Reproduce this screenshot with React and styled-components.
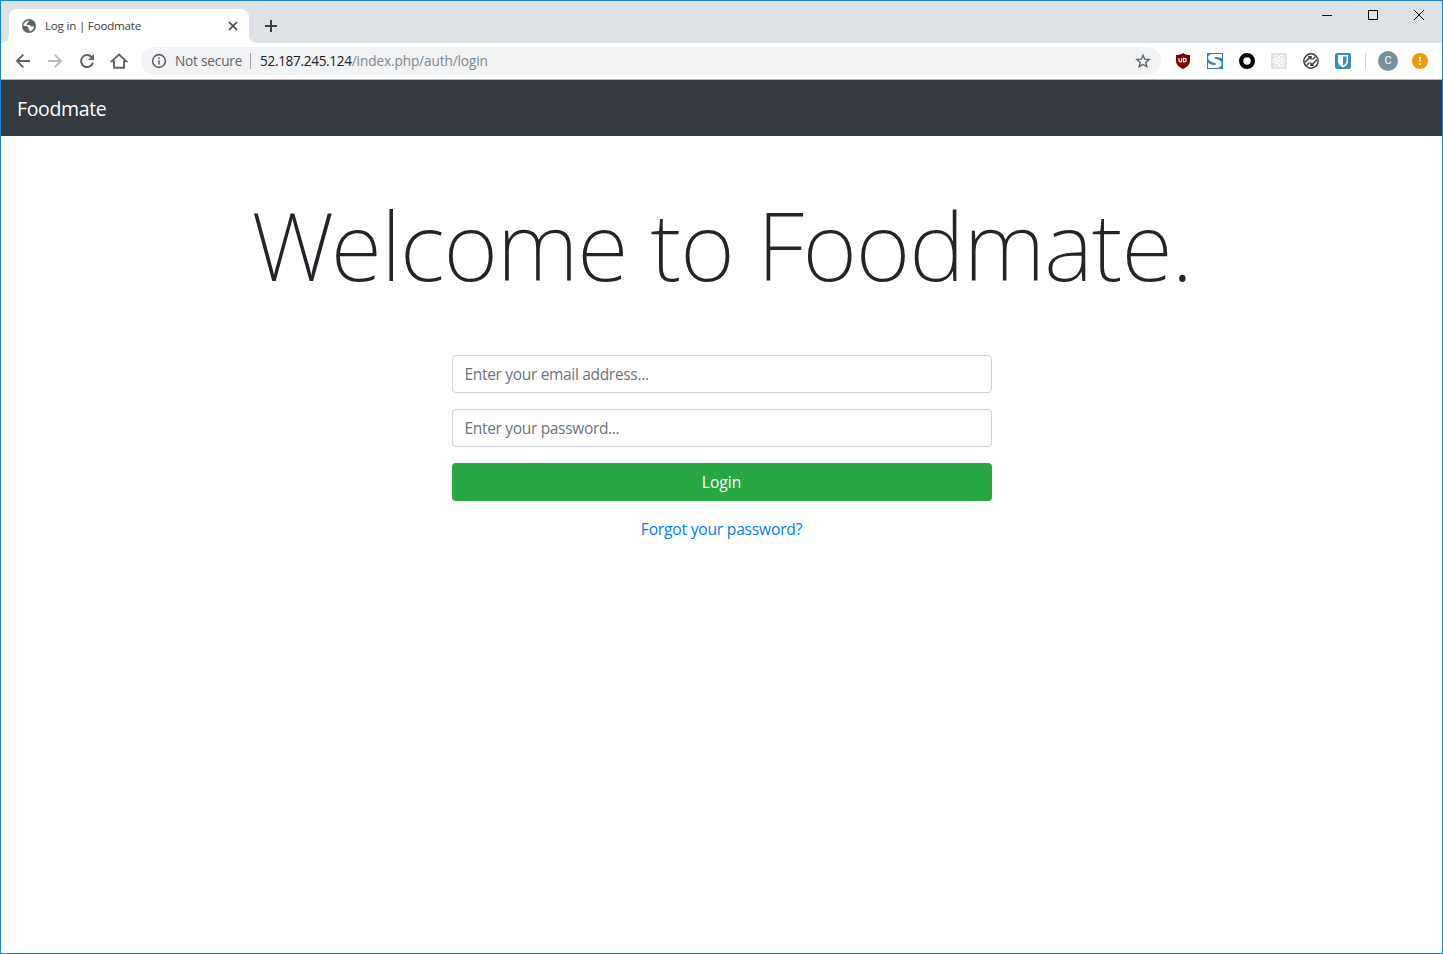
import React from "react";
import styled, { createGlobalStyle } from "styled-components";

const GlobalStyle = createGlobalStyle`
  *, *::before, *::after { box-sizing: border-box; }
  html, body { margin: 0; padding: 0; background: #fff; }
  body { font-family: "Segoe UI", "Open Sans", "Noto Sans", sans-serif; overflow: hidden; }
  svg { display: block; flex: none; }
`;

const Window = styled.div`
  width: 1443px;
  height: 954px;
  display: flex;
  flex-direction: column;
  border: 1px solid #1883d7;
  background: #fff;
`;

const TabStrip = styled.div`
  flex: none;
  height: 42px;
  display: flex;
  align-items: flex-end;
  background: #dee1e6;
`;

const TabCurve = styled.div`
  width: 8px;
  height: 8px;
  background: radial-gradient(circle at ${(p) => (p.$side === "left" ? "0 0" : "100% 0")}, #dee1e6 7.5px, #fff 8.5px);
`;

const Tab = styled.div`
  width: 240px;
  height: 34px;
  display: flex;
  align-items: center;
  padding: 0 9px 0 13px;
  border-radius: 8px 8px 0 0;
  background: #fff;
`;

const TabTitle = styled.span`
  flex: 1;
  margin-left: 9px;
  font-size: 11.6px;
  line-height: 16px;
  letter-spacing: -0.21px;
  white-space: nowrap;
  color: #3c4043;
`;

const IconButton = styled.button`
  flex: none;
  width: ${(p) => p.$width || 32}px;
  height: ${(p) => p.$height || 32}px;
  display: flex;
  align-items: center;
  justify-content: center;
  padding: 0;
  border: 0;
  background: none;
  color: ${(p) => p.$color || "#5f6368"};
`;

const WindowControls = styled.div`
  display: flex;
  align-self: flex-start;
  margin-left: auto;
`;

const Toolbar = styled.div`
  flex: none;
  height: 37px;
  display: flex;
  align-items: center;
  padding: 0 6px;
  border-bottom: 1px solid #b0b2b5;
  background: #fff;
`;

const AddressBar = styled.div`
  flex: none;
  width: 1020px;
  height: 28px;
  display: flex;
  align-items: center;
  margin: 0 6px;
  padding: 0 10px;
  border-radius: 14px;
  background: #f1f3f4;
  font-size: 13.6px;
  line-height: 20px;
  white-space: nowrap;
`;

const SecurityLabel = styled.span`
  margin-left: 8px;
  width: 67px;
  letter-spacing: -0.18px;
  color: #5f6368;
`;

const AddressDivider = styled.span`
  width: 1px;
  height: 16px;
  margin: 0 9px 0 8px;
  background: #9aa0a6;
`;

const Host = styled.span`
  letter-spacing: -0.32px;
  color: #202124;
`;

const UrlPath = styled.span`
  flex: 1;
  letter-spacing: -0.1px;
  color: #80868b;
`;

const ToolbarDivider = styled.span`
  width: 1px;
  height: 16px;
  margin: 0 6px;
  background: #c8cacd;
`;

const Avatar = styled.span`
  width: 20px;
  height: 20px;
  display: flex;
  align-items: center;
  justify-content: center;
  border-radius: 50%;
  background: #78909c;
  font: 11px/20px Roboto, sans-serif;
  color: #fff;
`;

const Navbar = styled.nav`
  flex: none;
  height: 56px;
  display: flex;
  align-items: center;
  padding: 2px 16px 0;
  background: #343a40;
`;

const Brand = styled.a`
  font-size: 19.5px;
  line-height: 30px;
  letter-spacing: -0.35px;
  color: #fff;
`;

const Page = styled.main`
  display: flex;
  flex-direction: column;
  align-items: center;
`;

const Heading = styled.h1`
  margin: 51px 0 52px;
  font-family: "Noto Sans", "Open Sans", sans-serif;
  font-size: 94px;
  font-weight: 240;
  line-height: 116px;
  letter-spacing: -1.2px;
  white-space: nowrap;
  color: #212529;
`;

const LoginForm = styled.form`
  width: 540px;
  display: flex;
  flex-direction: column;
  gap: 16px;
`;

const Field = styled.input`
  width: 100%;
  height: 38px;
  padding: 6px 12px;
  border: 1px solid #ced4da;
  border-radius: 4px;
  outline: 0;
  font-family: inherit;
  font-size: 15.5px;
  letter-spacing: -0.32px;
  &::placeholder { color: #6c757d; opacity: 1; }
`;

const SubmitButton = styled.button`
  height: 38px;
  padding: 0;
  border: 0;
  border-radius: 4px;
  background: #28a745;
  font-family: inherit;
  font-size: 15.6px;
  line-height: 24px;
  letter-spacing: 0;
  color: #fff;
`;

const ForgotLink = styled.a`
  align-self: center;
  font-size: 15.6px;
  line-height: 24px;
  letter-spacing: -0.2px;
  color: #007bff;
`;

const Globe = () => (
  <svg width="14" height="14" viewBox="0 0 14 14">
    <circle cx="7" cy="7" r="7" fill="#5f6368" />
    <path d="M8 1.5c-.9.5-2 .8-2 1.8 0 .9-.9 1-1.3 1.6-.3.6.2 1.2 1.1 1.2h1.6c.9 0 .9 1.3 1.8 1.4.8.1 1.7-.3 2.9-.3-.2 2.8-2.200 4.800-4.600 5.200v-1.500c-.1-.9-1.200-.8-1.300-1.700 0-.9.3-1.400-.4-1.800-1.100-.5-2.600-.5-4.200-.5C1.500 3.900 4.200 1.300 8 1.500z" fill="#fff" />
  </svg>
);

const Cross = () => (
  <svg width="10" height="10" viewBox="0 0 10 10" stroke="currentColor" strokeWidth="1.7">
    <path d="M1 1l8 8M9 1l-8 8" />
  </svg>
);

const Plus = () => (
  <svg width="12" height="12" viewBox="0 0 12 12" stroke="currentColor" strokeWidth="2">
    <path d="M6 0v12M0 6h12" />
  </svg>
);

const Arrow = ({ forward }) => (
  <svg width="16" height="16" viewBox="0 0 16 16" fill="none" stroke="currentColor" strokeWidth="1.9">
    <path d={forward ? "M1 8h13M7.700 1.600L14 8l-6.300 6.400" : "M15 8H2M8.300 1.600L2 8l6.300 6.400"} />
  </svg>
);

const Reload = () => (
  <svg width="16" height="16" viewBox="0 0 16 16" fill="none" stroke="currentColor" strokeWidth="2">
    <path d="M13.900 9.500A6 6 0 1 1 12.500 4" />
    <path d="M15 1v6H9z" fill="currentColor" stroke="none" />
  </svg>
);

const Home = () => (
  <svg width="18" height="16" viewBox="0 0 18 16" fill="none" stroke="currentColor" strokeWidth="1.9">
    <path d="M1.500 8.400H4v6.300h10V8.400h2.500L9 1.500z" />
  </svg>
);

const Info = () => (
  <svg width="16" height="16" viewBox="0 0 16 16" fill="none" stroke="#5f6368" strokeWidth="1.600">
    <circle cx="8" cy="8" r="6.400" />
    <path d="M8 7.200v4.300M8 4.500v1.600" />
  </svg>
);

const Star = () => (
  <svg width="16" height="16" viewBox="0 0 16 16" fill="none" stroke="#5f6368" strokeWidth="1.400">
    <path d="M8 2.200l1.700 4 4.400.4-3.300 2.900 1 4.200L8 11.500l-3.800 2.200 1-4.200-3.300-2.900 4.400-.4z" />
  </svg>
);

const AdShield = () => (
  <svg width="16" height="16" viewBox="0 0 16 16">
    <path d="M8 0c2 1.400 4 2 7 2v5.500c0 4-2.500 6.300-7 8.500-4.500-2.200-7-4.500-7-8.500V2c3 0 5-.6 7-2z" fill="#800000" />
    <path d="M4 5.200v2.300a1.400 1.400 0 0 0 2.800 0V5.200M8.500 5.300v3.500h1a1.750 1.750 0 0 0 0-3.500z" fill="none" stroke="#fff" strokeWidth="1.200" />
  </svg>
);

const SBadge = () => (
  <svg width="16" height="16" viewBox="0 0 16 16">
    <path d="M0 0h16v16H0z" fill="#3d7fb5" />
    <path d="M15 1H6C2.500 1 1 3 1.200 5c.3 3.800 4.700 4 7.300 5.200 1 .6.600 1.800-1 1.800C5 12 3 11 1 10v5h8c3.500 0 5.700-1.500 5.700-4.200 0-3.600-4-4.100-6.700-5.200-1.300-.6-.8-1.700.700-1.700 2 0 4.300.6 6.300 1.300z" fill="#fff" />
  </svg>
);

const Ring = () => (
  <svg width="16" height="16" viewBox="0 0 16 16">
    <circle cx="8" cy="8" r="5.850" fill="none" stroke="#000" strokeWidth="4.300" />
  </svg>
);

const Atom = () => (
  <svg width="16" height="16" viewBox="0 0 16 16">
    <path d="M0 0h16v16H0z" fill="#e3e3e3" />
    <g fill="none" stroke="#fff" strokeWidth=".9">
      <ellipse cx="8" cy="8" rx="6.500" ry="2.500" />
      <ellipse cx="8" cy="8" rx="6.500" ry="2.500" transform="rotate(60 8 8)" />
      <ellipse cx="8" cy="8" rx="6.500" ry="2.500" transform="rotate(120 8 8)" />
    </g>
    <circle cx="8" cy="8" r="1.300" fill="#fff" />
  </svg>
);

const SyncCircle = () => (
  <svg width="16" height="16" viewBox="0 0 16 16" fill="none" stroke="#3a3a3a">
    <circle cx="8" cy="8" r="7.200" strokeWidth="1.400" />
    <path d="M1.800 9.500L7 4.300M9 11.700l5.200-5.200" strokeWidth="1.500" />
    <path d="M4.500 3h4.200v4.200zM11.500 13H7.300V8.800z" fill="#3a3a3a" stroke="none" />
    <path d="M3.500 12.500l3-3M9.500 6.500l3-3" strokeWidth="1.400" />
  </svg>
);

const Vault = () => (
  <svg width="16" height="16" viewBox="0 0 16 16">
    <rect width="16" height="16" rx="2" fill="#3c8dbc" />
    <path d="M3 2h10v6.500c0 2.700-2 4.500-5 6-3-1.500-5-3.300-5-6z" fill="#fff" />
    <path d="M8 3.500h3.500v5c0 1.800-1.400 3.100-3.500 4.200z" fill="#3c8dbc" />
  </svg>
);

const Warning = () => (
  <svg width="16" height="16" viewBox="0 0 16 16">
    <circle cx="8" cy="8" r="8" fill="#f29900" />
    <path d="M8 3.700v5M8 10.300v2" stroke="#fff" strokeWidth="2" />
  </svg>
);

const Minimize = () => (
  <svg width="10" height="10" viewBox="0 0 10 10"><path d="M0 5h10v1H0z" /></svg>
);

const Maximize = () => (
  <svg width="10" height="10" viewBox="0 0 10 10" fill="none" stroke="#000"><path d="M.5.5h9v9h-9z" /></svg>
);

const CloseWindow = () => (
  <svg width="10" height="10" viewBox="0 0 10 10" stroke="#000"><path d="M0 0l10 10M10 0L0 10" /></svg>
);

const extensions = [AdShield, SBadge, Ring, Atom, SyncCircle, Vault];
const windowButtons = [Minimize, Maximize, CloseWindow];

export default function App() {
  return (
    <>
      <GlobalStyle />
      <Window>
        <TabStrip>
          <TabCurve $side="left" />
          <Tab>
            <Globe />
            <TabTitle>Log in | Foodmate</TabTitle>
            <IconButton $width={14} $height={16} $color="#3c4043"><Cross /></IconButton>
          </Tab>
          <TabCurve $side="right" />
          <IconButton $width={28} $height={34} $color="#3c4043"><Plus /></IconButton>
          <WindowControls>
            {windowButtons.map((Icon, i) => (
              <IconButton key={i} $width={46} $height={28}><Icon /></IconButton>
            ))}
          </WindowControls>
        </TabStrip>
        <Toolbar>
          <IconButton><Arrow /></IconButton>
          <IconButton $color="#babcbe"><Arrow forward /></IconButton>
          <IconButton><Reload /></IconButton>
          <IconButton><Home /></IconButton>
          <AddressBar>
            <Info />
            <SecurityLabel>Not secure</SecurityLabel>
            <AddressDivider />
            <Host>52.187.245.124</Host>
            <UrlPath>/index.php/auth/login</UrlPath>
            <Star />
          </AddressBar>
          {extensions.map((Icon, i) => (
            <IconButton key={i}><Icon /></IconButton>
          ))}
          <ToolbarDivider />
          <IconButton><Avatar>C</Avatar></IconButton>
          <IconButton><Warning /></IconButton>
        </Toolbar>
        <Navbar><Brand>Foodmate</Brand></Navbar>
        <Page>
          <Heading>Welcome to Foodmate.</Heading>
          <LoginForm onSubmit={(e) => e.preventDefault()}>
            <Field type="email" placeholder="Enter your email address..." />
            <Field type="password" placeholder="Enter your password..." />
            <SubmitButton type="submit">Login</SubmitButton>
            <ForgotLink>Forgot your password?</ForgotLink>
          </LoginForm>
        </Page>
      </Window>
    </>
  );
}
